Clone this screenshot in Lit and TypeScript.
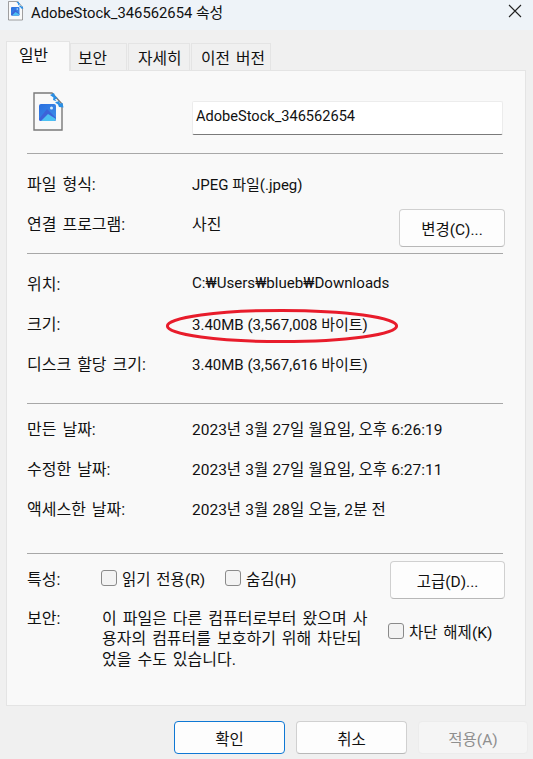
import { LitElement, html, css, svg } from 'lit';
import { customElement } from 'lit/decorators.js';

const fileIcon = (cls: string) => html`
  <svg class=${cls} viewBox="0 0 32 40">
    <defs>
      <linearGradient id="sky-${cls}" x1="0" y1="0" x2="1" y2="1">
        <stop offset="0" stop-color="#2a6fe0" />
        <stop offset="1" stop-color="#3f8fe8" />
      </linearGradient>
    </defs>
    ${svg`
      <path d="M1 1H19L29 12V38H1Z" fill="#f9f9f9" stroke="#7a7a7a" stroke-width="1.4" />
      <rect x="6" y="12" width="17" height="17" rx="2" fill="url(#sky-${cls})" />
      <circle cx="18.5" cy="16" r="1.5" fill="#d6ecfb" />
      <path d="M6 27L14 17L23 26V27a2 2 0 0 1-2 2H8a2 2 0 0 1-2-2Z" fill="#3c63d8" />
      <path d="M8 29L15 22L23 27a2 2 0 0 1-2 2Z" fill="#4cc0f2" />
      <path d="M17 3L21 1L22 4L24.500 6L22 7.500L24 9.500L20 8L20.500 5.500Z" fill="#2a8fe6" />
      <path d="M30.500 15.500L26 15L25 12.500L22 10.500L26 9L27 11.500L29.500 11Z" fill="#2a8fe6" />
    `}
  </svg>
`;

@customElement('app-root')
export class AppRoot extends LitElement {
  static override styles = css`
    :host {
      display: block;
      position: relative;
      width: 533px;
      height: 759px;
      overflow: hidden;
      background: #f0f0f0;
      color: #111;
      font-family: Roboto, 'Noto Sans CJK KR', sans-serif;
      font-size: 15.5px;
    }

    .title {
      box-sizing: border-box;
      display: flex;
      align-items: center;
      height: 30px;
      background: #eef3f8;
      padding: 0 11px 8px 8px;
      font-size: 14.8px;
    }
    .title-icon { width: 16px; height: 20px; margin-right: 7px; }
    .title-text { flex: 1; }
    .close { width: 14px; height: 14px; }

    .tabs {
      display: flex;
      align-items: flex-end;
      height: 40px;
      padding-left: 6px;
      position: relative;
      z-index: 1;
      font-size: 15.8px;
    }
    .tab {
      display: flex;
      align-items: center;
      height: 27px;
      margin-right: 1px;
      padding-left: 9px;
      background: #f0f0f0;
      border: 1px solid #e4e4e4;
      border-bottom: none;
      box-sizing: border-box;
      word-spacing: 2px;
    }
    .tab.active {
      width: 64px;
      height: 30px;
      margin-bottom: -1px;
      margin-right: 0;
      padding: 0 0 5px 12px;
      background: #f9f9f9;
    }
    .tab.security-tab { width: 57px; padding-left: 7px; }
    .tab.details { width: 62px; }
    .tab.previous { width: 80px; }

    .panel {
      box-sizing: border-box;
      width: 520px;
      height: 636px;
      margin-left: 6px;
      padding: 0 22px 0 20px;
      background: #f9f9f9;
      border: 1px solid #e4e4e4;
    }

    .head { display: flex; height: 82px; }
    .big-icon { width: 32px; height: 40px; margin: 21px 0 0 6px; }
    .name {
      box-sizing: border-box;
      width: 311px;
      height: 34px;
      margin: 30px 0 0 127px;
      padding: 0 3px 4px;
      display: flex;
      align-items: center;
      font-size: 14.6px;
      background: #fff;
      border: 1px solid #ececec;
      border-bottom: 1px solid #7a7a7a;
      border-radius: 2px;
    }

    .sep { height: 1px; background: #a8a8a8; }
    .sec { padding: 9px 0 10px; }
    .sec.wide { padding-bottom: 20px; }
    .sec.dates { padding: 4px 0 25px; }
    .sec.attrs { padding: 6px 0 0; }

    .row {
      display: grid;
      grid-template-columns: 165px 1fr;
      grid-template-rows: 40px;
      align-items: center;
      height: 40px;
    }
    .row.split { grid-template-columns: 165px 1fr auto; }

    .lbl { font-size: 16px; word-spacing: 2px; }
    .val { font-size: 15px; }
    .val.path { font-size: 15.1px; }
    .val.date { font-size: 15.5px; word-spacing: 0.4px; }

    .btn {
      display: flex;
      align-items: center;
      justify-content: center;
      box-sizing: border-box;
      background: #fdfdfd;
      border: 1px solid #d0d0d0;
      border-bottom-color: #b8b8b8;
      border-radius: 4px;
    }
    .change { width: 106px; height: 38px; margin: 10px -2px 0 0; }
    .advanced { width: 115px; height: 38px; margin-right: -2px; }

    .attr-row {
      display: grid;
      grid-template-columns: 74px 124px 1fr auto;
      align-items: center;
      height: 40px;
    }
    .attr-row .lbl, .attr-row .check { margin-bottom: 4px; }
    .check {
      display: flex;
      align-items: center;
      gap: 5px;
      white-space: nowrap;
      word-spacing: 2px;
    }
    .box {
      box-sizing: border-box;
      width: 16px;
      height: 16px;
      background: #f3f3f3;
      border: 1px solid #8a8a8a;
      border-radius: 3px;
      flex: none;
    }

    .security {
      display: grid;
      grid-template-columns: 75px 270px auto;
      margin-top: 9px;
    }
    .sec-label { line-height: 20px; }
    .sec-text { font-size: 16px; word-spacing: 2px; line-height: 20.4px; }
    .sec-check { align-self: start; margin: 11px 0 0 16px; }

    .actions {
      display: flex;
      gap: 11px;
      margin: 15px 0 0 174px;
    }
    .actions .btn { width: 111px; height: 33px; }
    .actions .ok { border: 1.5px solid #0f78d4; }
    .actions .off {
      width: 110px;
      color: #8f8f8f;
      background: #f5f5f5;
      border-color: #ececec;
    }

    .oval {
      position: absolute;
      left: 164px;
      top: 308px;
      width: 236px;
      height: 36px;
      pointer-events: none;
    }
  `;

  override render() {
    return html`
      <div class="title">
        ${fileIcon('title-icon')}
        <span class="title-text">AdobeStock_346562654 속성</span>
        <svg class="close" viewBox="0 0 14 14">
          <path d="M1 1L13 13M13 1L1 13" stroke="#222" stroke-width="1.1" fill="none" />
        </svg>
      </div>

      <div class="tabs">
        <div class="tab active">일반</div>
        <div class="tab security-tab">보안</div>
        <div class="tab details">자세히</div>
        <div class="tab previous">이전 버전</div>
      </div>

      <div class="panel">
        <div class="head">
          ${fileIcon('big-icon')}
          <div class="name">AdobeStock_346562654</div>
        </div>
        <div class="sep"></div>

        <div class="sec">
          <div class="row"><span class="lbl">파일 형식:</span><span class="val">JPEG 파일(.jpeg)</span></div>
          <div class="row split">
            <span class="lbl">연결 프로그램:</span><span class="lbl">사진</span>
            <div class="btn change">변경(C)...</div>
          </div>
        </div>
        <div class="sep"></div>

        <div class="sec wide">
          <div class="row"><span class="lbl">위치:</span><span class="val path">C:₩Users₩blueb₩Downloads</span></div>
          <div class="row"><span class="lbl">크기:</span><span class="val">3.40MB (3,567,008 바이트)</span></div>
          <div class="row"><span class="lbl">디스크 할당 크기:</span><span class="val">3.40MB (3,567,616 바이트)</span></div>
        </div>
        <div class="sep"></div>

        <div class="sec dates">
          <div class="row"><span class="lbl">만든 날짜:</span><span class="val date">2023년 3월 27일 월요일, 오후 6:26:19</span></div>
          <div class="row"><span class="lbl">수정한 날짜:</span><span class="val date">2023년 3월 27일 월요일, 오후 6:27:11</span></div>
          <div class="row"><span class="lbl">액세스한 날짜:</span><span class="val date">2023년 3월 28일 오늘, 2분 전</span></div>
        </div>
        <div class="sep"></div>

        <div class="sec attrs">
          <div class="attr-row">
            <span class="lbl">특성:</span>
            <label class="check"><span class="box"></span>읽기 전용(R)</label>
            <label class="check"><span class="box"></span>숨김(H)</label>
            <div class="btn advanced">고급(D)...</div>
          </div>
          <div class="security">
            <span class="sec-label lbl">보안:</span>
            <span class="sec-text">이 파일은 다른 컴퓨터로부터 왔으며 사용자의 컴퓨터를 보호하기 위해 차단되었을 수도 있습니다.</span>
            <label class="check sec-check"><span class="box"></span>차단 해제(K)</label>
          </div>
        </div>
      </div>

      <div class="actions">
        <div class="btn ok">확인</div>
        <div class="btn">취소</div>
        <div class="btn off">적용(A)</div>
      </div>

      <svg class="oval" viewBox="0 0 236 36">
        <ellipse cx="118" cy="18" rx="114.600" ry="15.600" fill="none" stroke="#e81c2b" stroke-width="3" />
      </svg>
    `;
  }
}

declare global {
  interface HTMLElementTagNameMap { 'app-root': AppRoot; }
}
